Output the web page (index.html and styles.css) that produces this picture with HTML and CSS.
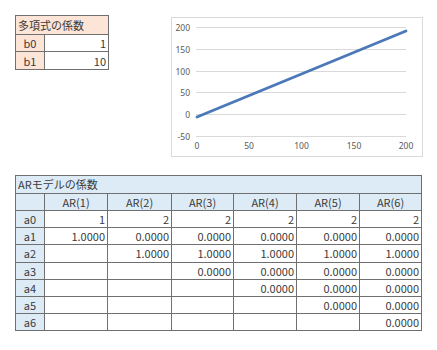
FILE: index.html
```html
<!DOCTYPE html>
<html lang="ja">
<head>
<meta charset="utf-8">
<link rel="stylesheet" href="styles.css">
</head>
<body>
<div class="top">
  <table class="sheet poly">
    <colgroup><col class="c-lab"><col class="c-val"></colgroup>
    <tr class="r-title"><td colspan="2" class="title peach">多項式の係数</td></tr>
    <tr class="r1"><td class="lab peach">b0</td><td class="num">1</td></tr>
    <tr class="r2"><td class="lab peach">b1</td><td class="num">10</td></tr>
  </table>
  <div class="chart">
    <svg width="252" height="140" viewBox="0 0 252 140">
      <g class="grid">
        <line x1="25" y1="10.5" x2="235" y2="10.5"/>
        <line x1="25" y1="32.5" x2="235" y2="32.5"/>
        <line x1="25" y1="54.5" x2="235" y2="54.5"/>
        <line x1="25" y1="75.5" x2="235" y2="75.5"/>
        <line x1="25" y1="97.5" x2="235" y2="97.5"/>
        <line x1="25" y1="119.5" x2="235" y2="119.5"/>
      </g>
      <g class="ylab">
        <text x="19" y="13.5">200</text>
        <text x="19" y="35.5">150</text>
        <text x="19" y="57.5">100</text>
        <text x="19" y="78.5">50</text>
        <text x="19" y="100.5">0</text>
        <text x="19" y="122.5">-50</text>
      </g>
      <g class="xlab">
        <text x="26" y="132">0</text>
        <text x="78" y="132">50</text>
        <text x="130.5" y="132">100</text>
        <text x="183" y="132">150</text>
        <text x="235" y="132">200</text>
      </g>
      <line class="series" x1="26" y1="100" x2="235" y2="14"/>
    </svg>
  </div>
</div>
<table class="sheet ar">
  <colgroup>
    <col class="c-a"><col class="c-63"><col class="c-64"><col class="c-62"><col class="c-63"><col class="c-63"><col class="c-62">
  </colgroup>
  <tr class="h18"><td colspan="7" class="title blue">ARモデルの係数</td></tr>
  <tr class="h17"><td class="blue"></td><td class="blue ctr">AR(1)</td><td class="blue ctr">AR(2)</td><td class="blue ctr">AR(3)</td><td class="blue ctr">AR(4)</td><td class="blue ctr">AR(5)</td><td class="blue ctr">AR(6)</td></tr>
  <tr class="h17"><td class="blue ctr">a0</td><td class="num">1</td><td class="num">2</td><td class="num">2</td><td class="num">2</td><td class="num">2</td><td class="num">2</td></tr>
  <tr class="h18"><td class="blue ctr">a1</td><td class="num">1.0000</td><td class="num">0.0000</td><td class="num">0.0000</td><td class="num">0.0000</td><td class="num">0.0000</td><td class="num">0.0000</td></tr>
  <tr class="h18"><td class="blue ctr">a2</td><td></td><td class="num">1.0000</td><td class="num">1.0000</td><td class="num">1.0000</td><td class="num">1.0000</td><td class="num">1.0000</td></tr>
  <tr class="h17"><td class="blue ctr">a3</td><td></td><td></td><td class="num">0.0000</td><td class="num">0.0000</td><td class="num">0.0000</td><td class="num">0.0000</td></tr>
  <tr class="h17"><td class="blue ctr">a4</td><td></td><td></td><td></td><td class="num">0.0000</td><td class="num">0.0000</td><td class="num">0.0000</td></tr>
  <tr class="h17"><td class="blue ctr">a5</td><td></td><td></td><td></td><td></td><td class="num">0.0000</td><td class="num">0.0000</td></tr>
  <tr class="h18"><td class="blue ctr">a6</td><td></td><td></td><td></td><td></td><td></td><td class="num">0.0000</td></tr>
</table>
</body>
</html>
```
FILE: styles.css
```css
html, body {
  margin: 0;
  padding: 0;
  background: #ffffff;
}
body {
  padding: 15px 0 0 15px;
  font-family: "Noto Sans CJK JP", "Noto Sans", sans-serif;
  font-size: 11px;
  color: #3a3a3a;
}
.top {
  display: flex;
  align-items: flex-start;
}
.sheet {
  border-collapse: collapse;
  table-layout: fixed;
  border: 1px solid #595959;
}
.sheet td {
  border: 1px solid #6f6f6f;
  padding: 0 2px;
  line-height: 14px;
  white-space: nowrap;
  overflow: hidden;
}
.poly { width: 93px; }
.poly .c-lab { width: 29px; }
.poly .c-val { width: 64px; }
.r-title td { height: 18px; }
.r1 td { height: 16px; }
.r2 td { height: 17px; }
.peach { background: #fce4d6; }
.blue { background: #ddebf7; }
.title { text-align: left; padding-left: 2px; }
.lab, .ctr { text-align: center; }
.num { text-align: right; }
.chart {
  margin: 2px 0 0 62px;
  width: 252px;
  height: 140px;
  border: 1px solid #d9d9d9;
  box-sizing: border-box;
}
.chart svg { display: block; margin: -1px 0 0 -1px; }
.grid line { stroke: #d9d9d9; stroke-width: 1; }
.ylab text, .xlab text {
  font-family: "Noto Sans", sans-serif;
  font-size: 8.5px;
  fill: #595959;
}
.ylab text { text-anchor: end; }
.xlab text { text-anchor: middle; }
.series { stroke: #4a78b8; stroke-width: 2.8; stroke-linecap: round; }
.ar {
  margin-top: 18px;
  width: 407px;
}
.ar .c-a { width: 29px; }
.ar .c-63 { width: 63px; }
.ar .c-64 { width: 64px; }
.ar .c-62 { width: 62px; }
.h18 td { height: 16.5px; }
.h17 td { height: 16px; }
```
